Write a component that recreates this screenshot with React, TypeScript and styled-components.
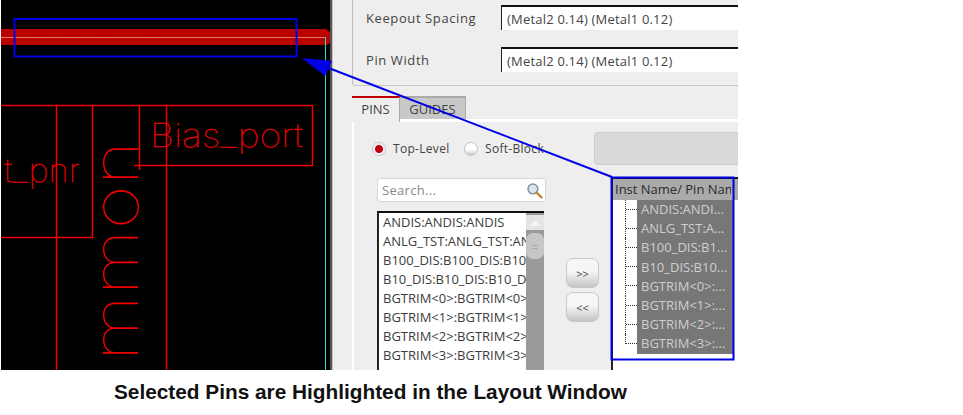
import styled, { createGlobalStyle } from "styled-components";

const LIST_ITEMS = [
  "ANDIS:ANDIS:ANDIS",
  "ANLG_TST:ANLG_TST:ANLG_TST",
  "B100_DIS:B100_DIS:B100_DIS",
  "B10_DIS:B10_DIS:B10_DIS",
  "BGTRIM<0>:BGTRIM<0>:BGTRIM<0>",
  "BGTRIM<1>:BGTRIM<1>:BGTRIM<1>",
  "BGTRIM<2>:BGTRIM<2>:BGTRIM<2>",
  "BGTRIM<3>:BGTRIM<3>:BGTRIM<3>",
];

const TREE_ITEMS = [
  "ANDIS:ANDI...",
  "ANLG_TST:A...",
  "B100_DIS:B1...",
  "B10_DIS:B10...",
  "BGTRIM<0>:...",
  "BGTRIM<1>:...",
  "BGTRIM<2>:...",
  "BGTRIM<3>:...",
];

function LayoutDrawing() {
  return (
    <Canvas viewBox="1 0 329 370">
      <rect x="0" y="29" width="327" height="16" fill="#bb0000" />
      <path d="M327 30 L330 32 V43 L327 45 Z" fill="#bb0000" />
      <path d="M0 37.5 H326" stroke="#e07a6a" strokeWidth="1" />
      <path d="M37 37 v1 M67 37 v1 M101 37 v1 M156 37 v1" stroke="#50d050" strokeWidth="1" />
      <path d="M325.5 37 V370" stroke="#20e0d8" strokeWidth="1" />
      <g stroke="#ee0000" strokeWidth="1.5" fill="none">
        <path d="M0 105.5 H312.5 V165.5 H134" />
        <path d="M56.5 105 V370" />
        <path d="M92.5 105 V237.5 H0" />
        <path d="M139.5 105 V170" />
        <path d="M166.5 105 V370" />
      </g>
      <BiasText x="150" y="147" textLength="153" lengthAdjust="spacingAndGlyphs">
        Bias_port
      </BiasText>
      <BiasText x="4" y="182" textLength="76" lengthAdjust="spacingAndGlyphs">
        t_pnr
      </BiasText>
      <VerticalText
        transform="translate(138 361) rotate(-90)"
        textLength="220"
        lengthAdjust="spacingAndGlyphs"
      >
        mmon
      </VerticalText>
    </Canvas>
  );
}

function SearchIcon() {
  return (
    <svg width="17" height="17" viewBox="0 0 16 16">
      <circle cx="6.5" cy="6.5" r="4.6" fill="#dce6f0" stroke="#7f93a8" strokeWidth="1.4" />
      <path d="M10 10 L14.5 14.5" stroke="#c88a3a" strokeWidth="2.4" strokeLinecap="round" />
    </svg>
  );
}

function Annotations() {
  return (
    <Overlay viewBox="0 0 738 370">
      <g fill="none" stroke="#0000e6" strokeWidth="2">
        <rect x="14.5" y="19" width="282" height="37.5" />
        <rect x="611.5" y="177.5" width="122" height="182" />
        <path d="M326 67 L612 177" />
      </g>
      <path d="M302 58 L332 61 L325 76 Z" fill="#0000e6" />
    </Overlay>
  );
}

export default function App() {
  return (
    <>
      <GlobalStyle />
      <Page>
        <Figure>
          <CanvasColumn>
            <LayoutDrawing />
          </CanvasColumn>
          <Panel>
            <ConstraintFrame>
              <FieldRow>
                <FieldLabel>Keepout Spacing</FieldLabel>
                <FieldInput>(Metal2 0.14) (Metal1 0.12)</FieldInput>
              </FieldRow>
              <FieldRow>
                <FieldLabel>Pin Width</FieldLabel>
                <FieldInput>(Metal2 0.14) (Metal1 0.12)</FieldInput>
              </FieldRow>
            </ConstraintFrame>
            <TabBar>
              <Tab $active>PINS</Tab>
              <Tab>GUIDES</Tab>
            </TabBar>
            <TabBody>
              <RadioRow>
                <Radio $checked />
                <RadioLabel>Top-Level</RadioLabel>
                <Radio />
                <RadioLabel>Soft-Block</RadioLabel>
                <DisabledButton />
              </RadioRow>
              <Columns>
                <PinColumn>
                  <SearchBox>
                    <span>Search...</span>
                    <SearchIcon />
                  </SearchBox>
                  <ListBox>
                    <ListItems>
                      {LIST_ITEMS.map((item) => (
                        <ListItem key={item}>{item}</ListItem>
                      ))}
                    </ListItems>
                    <ScrollTrack>
                      <ScrollUp>
                        <ScrollArrow />
                      </ScrollUp>
                      <ScrollThumb />
                    </ScrollTrack>
                  </ListBox>
                </PinColumn>
                <MoveButtons>
                  <MoveButton>&gt;&gt;</MoveButton>
                  <MoveButton>&lt;&lt;</MoveButton>
                </MoveButtons>
                <Tree>
                  <TreeHeader>
                    <HeaderCell>Inst Name/ Pin Name</HeaderCell>
                  </TreeHeader>
                  {TREE_ITEMS.map((item, i) => (
                    <TreeRow key={item}>
                      <Connector $last={i === TREE_ITEMS.length - 1} />
                      <SelectedCell>{item}</SelectedCell>
                    </TreeRow>
                  ))}
                </Tree>
              </Columns>
            </TabBody>
          </Panel>
          <Annotations />
        </Figure>
        <Caption>Selected Pins are Highlighted in the Layout Window</Caption>
      </Page>
    </>
  );
}

const GlobalStyle = createGlobalStyle`
  html, body {
    margin: 0;
    padding: 0;
    background: #ffffff;
  }
`;

const Page = styled.div`
  width: 963px;
  height: 415px;
  overflow: hidden;
  background: #ffffff;
`;

const Figure = styled.div`
  position: relative;
  display: flex;
  width: 738px;
  height: 370px;
  overflow: hidden;
`;

const CanvasColumn = styled.div`
  flex: none;
  width: 329px;
  height: 370px;
  padding-left: 1px;
  background: #ffffff;
  border-right: 2px solid #555555;
`;

const Canvas = styled.svg`
  display: block;
  width: 329px;
  height: 370px;
  background: #000000;
`;

const BiasText = styled.text`
  font-family: "Inter", "Liberation Sans", sans-serif;
  font-weight: 100;
  font-size: 32px;
  fill: #f00000;
  stroke: #f00000;
  stroke-width: 0.3px;
`;

const VerticalText = styled.text`
  font-family: "Inter", "Liberation Sans", sans-serif;
  font-weight: 100;
  font-size: 64px;
  fill: #f00000;
`;

const Overlay = styled.svg`
  position: absolute;
  left: 0;
  top: 0;
  width: 738px;
  height: 370px;
  pointer-events: none;
`;

const Panel = styled.div`
  flex: 1;
  min-width: 0;
  background: #eeeeee;
  border-left: 1px solid #c4c4c4;
  overflow: hidden;
  font-family: "Open Sans", "Liberation Sans", sans-serif;
  font-size: 13px;
  color: #444444;
`;

const ConstraintFrame = styled.div`
  box-sizing: border-box;
  display: flex;
  flex-direction: column;
  gap: 17px;
  height: 86px;
  margin-left: 19px;
  padding: 5px 0 0 13px;
  border-left: 1px solid #bdbdbd;
  border-bottom: 1px solid #c8c8c8;
  border-bottom-left-radius: 4px;
`;

const FieldRow = styled.div`
  display: flex;
  align-items: center;
`;

const FieldLabel = styled.div`
  flex: none;
  width: 135px;
  letter-spacing: 0.6px;
`;

const FieldInput = styled.div`
  flex: 1;
  box-sizing: border-box;
  height: 25px;
  padding: 2px 0 0 5px;
  line-height: 20px;
  letter-spacing: 0.2px;
  background: #ffffff;
  border-top: 2px solid #111111;
  border-left: 1px solid #222222;
`;

const TabBar = styled.div`
  display: flex;
  height: 23px;
  margin: 10px 0 0 19px;
`;

const Tab = styled.div<{ $active?: boolean }>`
  position: relative;
  box-sizing: border-box;
  display: flex;
  align-items: center;
  justify-content: center;
  width: ${(p) => (p.$active ? "48px" : "66px")};
  height: ${(p) => (p.$active ? "26px" : "23px")};
  padding-bottom: ${(p) => (p.$active ? "3px" : "0")};
  background: ${(p) => (p.$active ? "#eeeeee" : "#c8c8c8")};
  border-top: 2px solid ${(p) => (p.$active ? "#c00000" : "#aaaaaa")};
  border-right: 1px solid #aaaaaa;
`;

const TabBody = styled.div`
  margin-left: 19px;
  height: 260px;
  border-top: 3px solid #ffffff;
  border-left: 2px solid #ffffff;
`;

const RadioRow = styled.div`
  display: flex;
  align-items: center;
  height: 31px;
  margin-top: 11px;
  padding-left: 18px;
`;

const Radio = styled.span<{ $checked?: boolean }>`
  flex: none;
  box-sizing: border-box;
  width: 14px;
  height: 14px;
  margin-top: 1px;
  border-radius: 50%;
  border: 1px solid #c4c4c4;
  background: ${(p) =>
    p.$checked
      ? "radial-gradient(circle, #c00010 0 3.5px, #f4f4f4 4.5px)"
      : "linear-gradient(#ffffff 55%, #c8c8c8)"};
`;

const RadioLabel = styled.span`
  flex: none;
  width: 71px;
  margin-left: 7px;
  font-size: 12px;
  letter-spacing: 0.3px;
  white-space: nowrap;
`;

const DisabledButton = styled.div`
  flex: none;
  width: 160px;
  height: 31px;
  margin-left: 38px;
  background: #d9d9d9;
  border: 1px solid #cccccc;
  border-radius: 4px;
`;

const Columns = styled.div`
  display: flex;
  margin-top: 14px;
  padding-left: 23px;
`;

const PinColumn = styled.div`
  flex: none;
  display: flex;
  flex-direction: column;
  width: 169px;
  gap: 9px;
`;

const SearchBox = styled.div`
  box-sizing: border-box;
  display: flex;
  align-items: center;
  justify-content: space-between;
  height: 24px;
  padding: 0 2px 0 4px;
  background: #ffffff;
  border: 1px solid #d8d8d8;
  border-radius: 3px;
  letter-spacing: 0.3px;
  color: #888888;
`;

const ListBox = styled.div`
  display: flex;
  width: 167px;
  height: 170px;
  box-sizing: border-box;
  background: #ffffff;
  border-top: 2px solid #111111;
  border-left: 2px solid #222222;
`;

const ListItems = styled.div`
  flex: 1;
  min-width: 0;
  overflow: hidden;
`;

const ListItem = styled.div`
  height: 19px;
  padding-left: 4px;
  line-height: 19px;
  white-space: nowrap;
  color: #3c3c3c;
`;

const ScrollTrack = styled.div`
  flex: none;
  width: 18px;
  background: #9a9a9a;
  padding-top: 2px;
`;

const ScrollUp = styled.div`
  display: flex;
  align-items: center;
  justify-content: center;
  height: 15px;
  background: #e4e4e4;
`;

const ScrollArrow = styled.span`
  width: 0;
  height: 0;
  border-left: 5px solid transparent;
  border-right: 5px solid transparent;
  border-bottom: 6px solid #f6f6f6;
`;

const ScrollThumb = styled.div`
  height: 26px;
  margin-top: 3px;
  border-radius: 7px;
  background: repeating-linear-gradient(#c6c6c6 0 2px, #a8a8a8 2px 3px) center / 6px 6px no-repeat, #c6c6c6;
`;

const MoveButtons = styled.div`
  flex: none;
  display: flex;
  flex-direction: column;
  gap: 4px;
  margin: 80px 0 0 20px;
`;

const MoveButton = styled.div`
  box-sizing: border-box;
  display: flex;
  align-items: center;
  justify-content: center;
  width: 33px;
  height: 30px;
  font-size: 11px;
  color: #444444;
  border: 1px solid #c8c8c8;
  border-radius: 7px;
  background: linear-gradient(#f6f6f6 45%, #c4c4c4);
`;

const Tree = styled.div`
  flex: none;
  width: 125px;
  height: 200px;
  margin: -1px 0 0 12px;
  background: #ffffff;
  border-top: 2px solid #111111;
  border-left: 2px solid #222222;
`;

const TreeHeader = styled.div`
  height: 21px;
  background: #aaaaaa;
  color: #2c2c2c;
  line-height: 21px;
`;

const HeaderCell = styled.div`
  width: 118px;
  padding-left: 2px;
  box-sizing: border-box;
  white-space: nowrap;
  overflow: hidden;
`;

const TreeRow = styled.div`
  display: flex;
  width: 120px;
  height: 19.2px;
`;

const Connector = styled.span<{ $last: boolean }>`
  flex: none;
  box-sizing: border-box;
  width: 12px;
  height: ${(p) => (p.$last ? "50%" : "100%")};
  margin-left: 12px;
  border-left: 1px dotted #333333;
  &::after {
    content: "";
    display: block;
    height: 9.6px;
    border-bottom: 1px dotted #333333;
    box-sizing: border-box;
  }
`;

const SelectedCell = styled.span`
  flex: 1;
  min-width: 0;
  padding-left: 4px;
  background: #777777;
  color: #cfcfcf;
  line-height: 19.2px;
  white-space: nowrap;
  overflow: hidden;
`;

const Caption = styled.div`
  padding: 10px 0 0 114px;
  font-family: "Liberation Sans", Arial, sans-serif;
  font-weight: 700;
  font-size: 20.8px;
  line-height: 24px;
  color: #111111;
  white-space: nowrap;
`;
